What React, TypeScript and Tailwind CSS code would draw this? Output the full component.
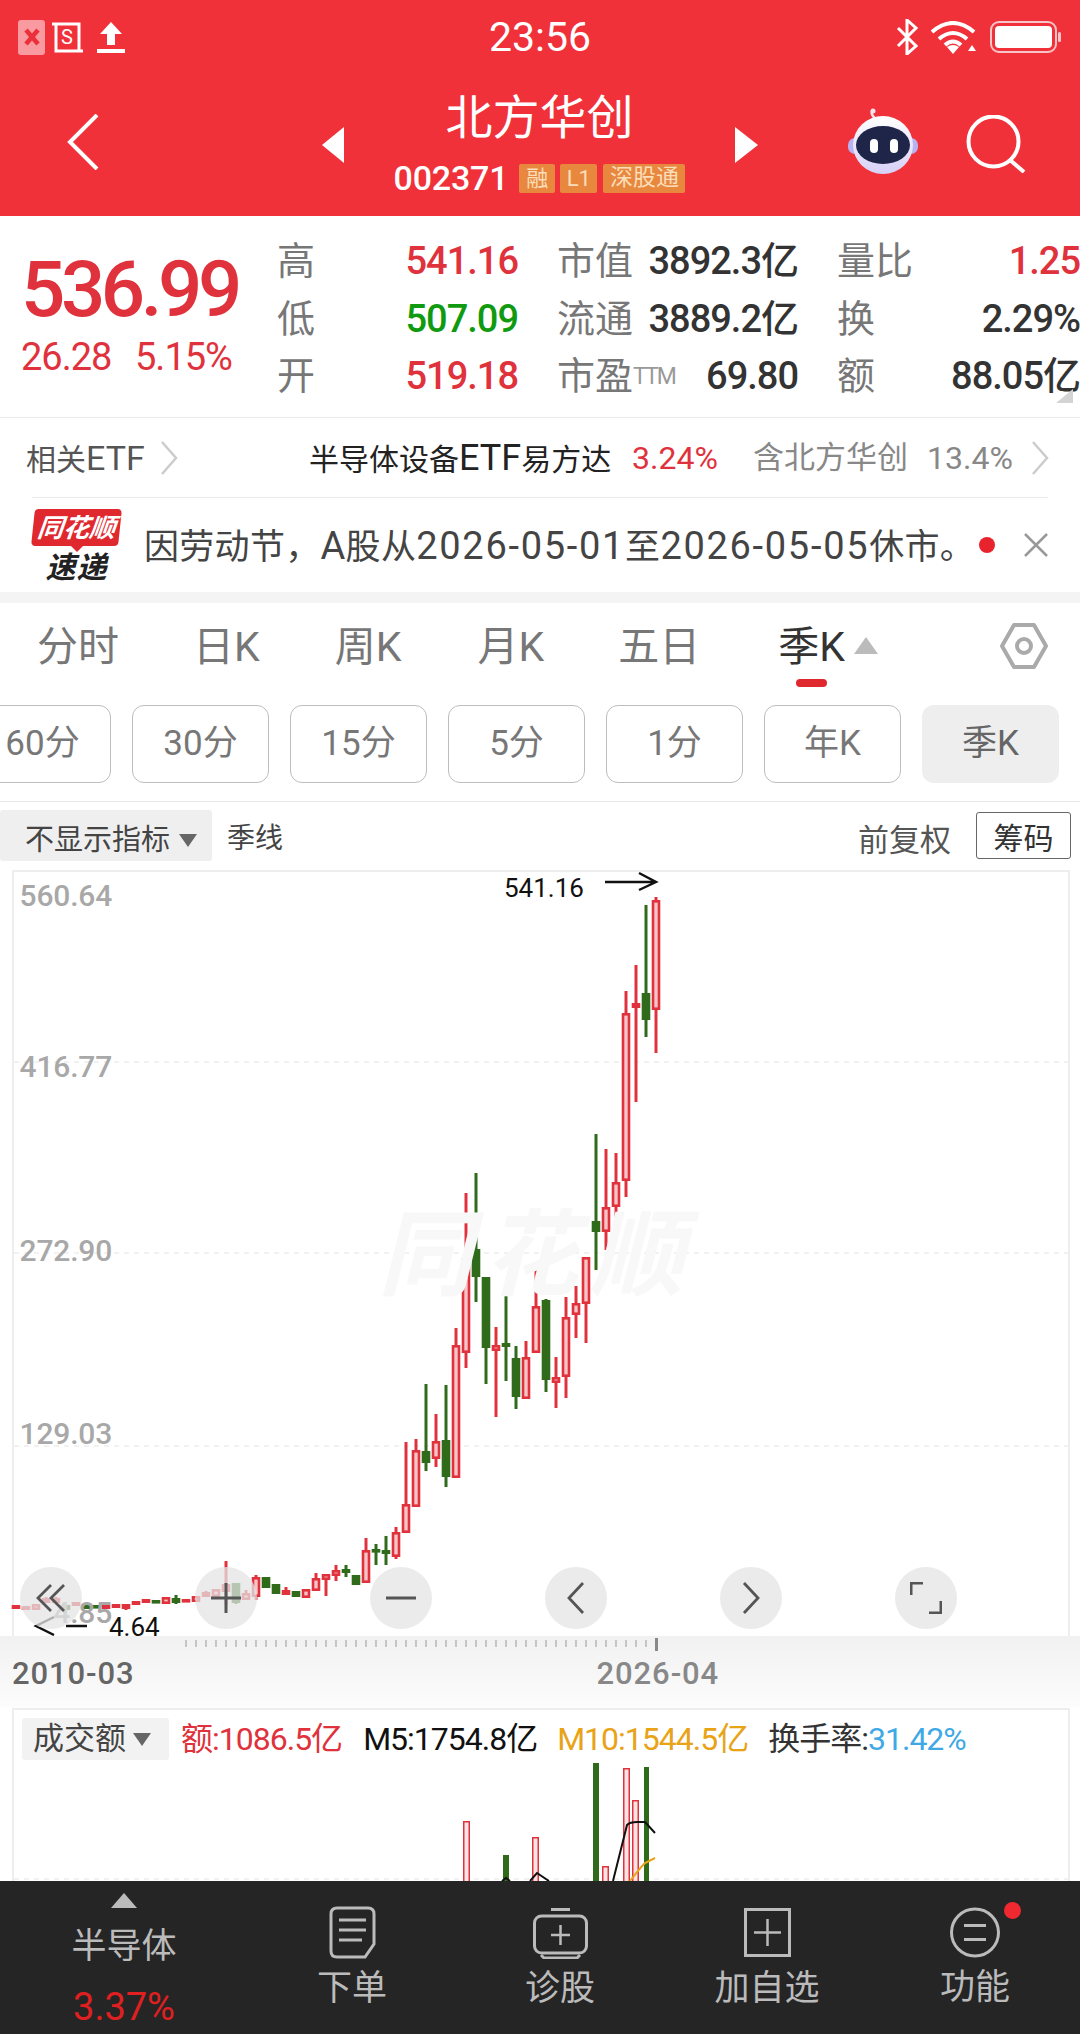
import React from "react";

type Candle = [number, number, number, number, "r" | "g"];

// high, body top, body bottom, low - left to right, 10px apart starting at x=16
const candles: Candle[] = [
  [1605, 1605, 1609, 1609, "r"],
  [1606, 1606, 1610, 1610, "r"],
  [1604, 1604, 1610, 1610, "r"],
  [1597, 1598, 1603, 1603, "r"],
  [1597, 1598, 1603, 1603, "r"],
  [1605, 1605, 1610, 1610, "g"],
  [1602, 1602, 1606, 1606, "r"],
  [1605, 1605, 1609, 1609, "g"],
  [1605, 1605, 1608, 1608, "g"],
  [1605, 1605, 1609, 1609, "r"],
  [1604, 1604, 1608, 1608, "r"],
  [1604, 1604, 1609, 1610, "r"],
  [1601, 1601, 1605, 1605, "r"],
  [1599, 1599, 1603, 1603, "r"],
  [1600, 1600, 1603, 1603, "g"],
  [1597, 1597, 1604, 1604, "r"],
  [1595, 1598, 1603, 1604, "g"],
  [1599, 1599, 1602, 1602, "r"],
  [1596, 1596, 1602, 1602, "r"],
  [1591, 1592, 1597, 1597, "r"],
  [1589, 1589, 1597, 1597, "r"],
  [1561, 1584, 1592, 1605, "r"],
  [1583, 1583, 1603, 1604, "g"],
  [1590, 1593, 1600, 1600, "r"],
  [1575, 1577, 1597, 1600, "r"],
  [1577, 1577, 1588, 1588, "g"],
  [1584, 1584, 1594, 1594, "g"],
  [1587, 1590, 1595, 1595, "r"],
  [1591, 1591, 1597, 1597, "g"],
  [1589, 1589, 1598, 1598, "r"],
  [1573, 1578, 1591, 1591, "r"],
  [1574, 1574, 1580, 1596, "r"],
  [1565, 1570, 1576, 1581, "r"],
  [1565, 1569, 1573, 1577, "g"],
  [1575, 1575, 1585, 1585, "g"],
  [1538, 1550, 1583, 1583, "r"],
  [1544, 1549, 1552, 1565, "g"],
  [1536, 1550, 1554, 1565, "g"],
  [1527, 1532, 1557, 1559, "r"],
  [1442, 1504, 1533, 1533, "r"],
  [1439, 1450, 1507, 1507, "r"],
  [1384, 1451, 1463, 1471, "g"],
  [1414, 1441, 1459, 1467, "r"],
  [1385, 1440, 1477, 1487, "g"],
  [1328, 1345, 1478, 1478, "r"],
  [1193, 1258, 1353, 1368, "r"],
  [1173, 1249, 1277, 1302, "g"],
  [1277, 1277, 1348, 1384, "g"],
  [1327, 1345, 1351, 1417, "r"],
  [1285, 1343, 1347, 1381, "g"],
  [1346, 1358, 1397, 1409, "g"],
  [1341, 1357, 1399, 1399, "r"],
  [1267, 1306, 1353, 1353, "r"],
  [1299, 1300, 1380, 1392, "g"],
  [1357, 1377, 1383, 1408, "r"],
  [1297, 1317, 1377, 1398, "r"],
  [1286, 1303, 1315, 1338, "r"],
  [1257, 1257, 1304, 1343, "r"],
  [1134, 1221, 1232, 1270, "g"],
  [1149, 1207, 1232, 1250, "r"],
  [1153, 1182, 1207, 1222, "r"],
  [991, 1013, 1181, 1197, "r"],
  [965, 1003, 1008, 1102, "r"],
  [905, 993, 1020, 1037, "g"],
  [897, 900, 1010, 1053, "r"],
];

const ticks = Array.from({ length: 47 }, (_, i) => 186 + i * 10);

const periods = ["60分", "30分", "15分", "5分", "1分", "年K"];

const quoteRows = [
  { a: "高", av: "541.16", ac: "text-[#E0323C]", b: "市值", bv: "3892.3亿", c: "量比", cv: "1.25", cc: "text-[#E0323C]" },
  { a: "低", av: "507.09", ac: "text-[#109A10]", b: "流通", bv: "3889.2亿", c: "换", cv: "2.29%", cc: "text-[#333]" },
  { a: "开", av: "519.18", ac: "text-[#E0323C]", b: "市盈", bv: "69.80", c: "额", cv: "88.05亿", cc: "text-[#333]" },
];

function CandleChart() {
  return (
    <svg className="absolute inset-0" width={1080} height={766} viewBox="0 870 1080 766">
      <rect x={13} y={871} width={1056} height={770} fill="none" stroke="#eeeeee" strokeWidth={2} />
      {[1062, 1253, 1446].map((y) => (
        <line key={y} x1={14} x2={1068} y1={y} y2={y} stroke="#e4e4e4" strokeDasharray="5 5" />
      ))}
      {candles.map(([high, top, bottom, low, kind], i) => {
        const x = 16 + i * 10;
        const color = kind === "r" ? "#E0323C" : "#2F6B1A";
        return (
          <g key={i}>
            <line x1={x} x2={x} y1={high} y2={top} stroke={color} strokeWidth={3} />
            <line x1={x} x2={x} y1={bottom} y2={low} stroke={color} strokeWidth={3} />
            <rect
              x={x - 3}
              y={top + 1.3}
              width={6}
              height={Math.max(bottom - top - 2.6, 1)}
              fill={kind === "r" ? "#F7C4C7" : color}
              stroke={color}
              strokeWidth={2.6}
            />
          </g>
        );
      })}
      <path d="M605 882H656M639 873L656 882L639 890" fill="none" stroke="#111" strokeWidth={2.4} />
      <path d="M87 1626H66M54 1617L36 1626L54 1635" fill="none" stroke="#111" strokeWidth={2.4} />
    </svg>
  );
}

function VolumeChart() {
  const bars: [number, number, number, string][] = [
    [463, 7, 1821, "r"],
    [503, 6, 1855, "g"],
    [532, 7, 1837, "r"],
    [593, 6, 1763, "g"],
    [602, 7, 1866, "r"],
    [623, 7, 1768, "r"],
    [632, 7, 1800, "r"],
    [644, 5, 1767, "g"],
  ];
  return (
    <svg className="absolute inset-0" width={1080} height={174} viewBox="0 1707 1080 174">
      <rect x={13} y={1709} width={1056} height={200} fill="none" stroke="#eeeeee" strokeWidth={2} />
      <line x1={14} x2={1068} y1={1879} y2={1879} stroke="#e4e4e4" strokeDasharray="5 5" />
      {bars.map(([x, w, top, kind]) => (
        <rect
          key={x}
          x={x + 0.75}
          y={top + 0.75}
          width={w - 1.5}
          height={1881 - top}
          fill={kind === "r" ? "#FBE3E4" : "#2F6B1A"}
          stroke={kind === "r" ? "#E0323C" : "#2F6B1A"}
          strokeWidth={1.5}
        />
      ))}
      <path d="M502 1881L506 1878L510 1881M530 1881L537 1873L549 1881M613 1881L627 1825Q630 1822 637 1822H645L655 1833" fill="none" stroke="#111" strokeWidth={2} />
      <path d="M630 1881Q640 1868 645 1863L655 1858" fill="none" stroke="#E8A317" strokeWidth={2} />
    </svg>
  );
}

function Robot() {
  return (
    <svg width={72} height={66} viewBox="0 0 72 66">
      <defs>
        <linearGradient id="head" x1="0" y1="0" x2="0" y2="1">
          <stop offset="0" stopColor="#ffffff" />
          <stop offset="1" stopColor="#D6D0F7" />
        </linearGradient>
      </defs>
      <path d="M30 12Q22 6 26 2" fill="none" stroke="#F4E3EA" strokeWidth={2.5} />
      <circle cx={26} cy={3} r={2.5} fill="#F4E3EA" />
      <rect x={1} y={30} width={70} height={16} rx={7} fill="#B9B2F0" />
      <ellipse cx={36} cy={37} rx={30} ry={29} fill="url(#head)" />
      <ellipse cx={36} cy={37} rx={27} ry={19} fill="#1E2549" />
      <rect x={23} y={31} width={8} height={14} rx={4} fill="#ffffff" />
      <rect x={43} y={31} width={8} height={14} rx={4} fill="#ffffff" />
    </svg>
  );
}

function StatusBar() {
  return (
    <div className="h-[74px] grid grid-cols-3 items-center">
      <div className="flex items-center pl-[18px]">
        <div className="w-[27px] h-[35px] rounded-[3px] bg-[#F99AA0] flex items-center justify-center">
          <svg width={16} height={18} viewBox="0 0 16 18">
            <path d="M2 2L14 16M14 2L2 16" stroke="#EC303A" strokeWidth={4.5} />
          </svg>
        </div>
        <svg className="ml-[7px]" width={32} height={33} viewBox="0 0 32 33">
          <path d="M0 3H27V30M4 3V30H31" fill="none" stroke="#fff" strokeWidth={3} />
          <text x={9} y={23} fontSize={20} fill="#fff" fontFamily="Roboto">S</text>
        </svg>
        <svg className="ml-[13px]" width={28} height={32} viewBox="0 0 28 32">
          <path d="M14 1L25 13H18V24H10V13H3Z" fill="#fff" />
          <rect x={0} y={28} width={28} height={4} fill="#fff" />
        </svg>
      </div>
      <div className="text-center text-[41px] text-white leading-none">23:56</div>
      <div className="flex items-center justify-end pr-[19px]">
        <svg width={24} height={36} viewBox="0 0 24 36">
          <path d="M3 9L21 27L12 35V1L21 9L3 27" fill="none" stroke="#fff" strokeWidth={3} />
        </svg>
        <svg className="ml-[11px]" width={47} height={33} viewBox="0 0 47 33">
          <path d="M2 11Q23 -7 44 11M9 18Q23 6 37 18M15 24Q23 17 31 24" fill="none" stroke="#fff" strokeWidth={4} />
          <path d="M17 26L23 33L29 26Q23 22 17 26Z" fill="#fff" />
          <path d="M42 24L46 30H38Z" fill="#fff" />
        </svg>
        <svg className="ml-[13px]" width={71} height={32} viewBox="0 0 71 32">
          <rect x={1} y={1} width={65} height={30} rx={8} fill="none" stroke="#F9C4C7" strokeWidth={2} />
          <rect x={5} y={5} width={57} height={22} rx={4} fill="#fff" />
          <rect x={68} y={11} width={3} height={10} rx={1.5} fill="#F9C4C7" />
        </svg>
      </div>
    </div>
  );
}

function NavBar() {
  return (
    <div className="h-[142px] flex items-start relative">
      <svg className="ml-[67px] mt-[40px]" width={32} height={56} viewBox="0 0 32 56">
        <path d="M30 1L3 28L30 55" fill="none" stroke="#fff" strokeWidth={4} />
      </svg>
      <div className="ml-[223px] mt-[53px] w-0 h-0 border-y-[18px] border-y-transparent border-r-[22px] border-r-white" />
      <div className="w-[391px] flex flex-col items-center">
        <div className="text-[47px] leading-[46px] text-white mt-[21px]">北方华创</div>
        <div className="flex items-center mt-[22px] h-[30px]">
          <span className="text-[34px] font-medium text-white tracking-[-0.2px] mr-[11px]">002371</span>
          <span className="h-[29px] px-[7px] flex items-center rounded-[2px] bg-[#E8883E] text-[#FBDDB9] text-[22px]">融</span>
          <span className="h-[29px] w-[37px] ml-[5px] flex items-center justify-center rounded-[2px] bg-[#E8883E] text-[#FBDDB9] text-[22px]">L1</span>
          <span className="h-[29px] w-[82px] ml-[6px] flex items-center justify-center rounded-[2px] bg-[#E8883E] text-[#FBDDB9] text-[23px]">深股通</span>
        </div>
      </div>
      <div className="mt-[53px] w-0 h-0 border-y-[18px] border-y-transparent border-l-[23px] border-l-white" />
      <div className="ml-[89px] mt-[34px]">
        <Robot />
      </div>
      <svg className="ml-[47px] mt-[41px]" width={60} height={58} viewBox="0 0 60 58">
        <circle cx={27.5} cy={26.5} r={25} fill="none" stroke="#fff" strokeWidth={4} />
        <path d="M44 45L58 57" stroke="#fff" strokeWidth={4} />
      </svg>
    </div>
  );
}

function Quote() {
  return (
    <div className="h-[202px] flex border-b border-[#ececec] relative overflow-hidden">
      <div className="w-[277px] pl-[21px] pt-[34px]">
        <div className="text-[78px] leading-[80px] font-medium text-[#E0323C] tracking-[-4.4px]">536.99</div>
        <div className="flex text-[38px] leading-[40px] text-[#E0323C] tracking-[-1px] mt-[7px]">
          <span className="w-[114px]">26.28</span>
          <span>5.15%</span>
        </div>
      </div>
      <div className="flex flex-col pt-[17px]">
        {quoteRows.map((r) => (
          <div key={r.a} className="h-[57.5px] flex items-center text-[38px] text-[#777]">
            <span className="w-[60px]">{r.a}</span>
            <span className={`w-[181px] text-right text-[38px] font-medium tracking-[-1px] ${r.ac}`}>{r.av}</span>
            <span className="w-[39px]" />
            <span className="w-[76px] whitespace-nowrap">{r.b}</span>
            <span className="w-[165px] flex items-center justify-end text-[38px] font-medium text-[#333] tracking-[-1px] whitespace-nowrap">
              {r.b === "市盈" && <span className="text-[23px] font-normal text-[#999] mr-auto tracking-[-2px]">TTM</span>}
              {r.bv}
            </span>
            <span className="w-[39px]" />
            <span className="w-[100px]">{r.c}</span>
            <span className={`w-[143px] text-right text-[38px] font-medium tracking-[-1px] whitespace-nowrap ${r.cc}`}>{r.cv}</span>
          </div>
        ))}
      </div>
      <div className="absolute left-[1056px] top-[173px] w-0 h-0 border-b-[14px] border-b-[#d4d4d4] border-l-[17px] border-l-transparent" />
    </div>
  );
}

function EtfRow() {
  return (
    <div className="h-[79px] flex items-center text-[30px] leading-none whitespace-nowrap">
      <span className="ml-[26px] w-[121px] text-[#555]">
        相关<span className="text-[34px]">ETF</span>
      </span>
      <svg className="ml-[13px]" width={18} height={34} viewBox="0 0 18 34">
        <path d="M2 1L16 17L2 33" fill="none" stroke="#ccc" strokeWidth={2.5} />
      </svg>
      <span className="ml-[131px] w-[323px] text-[#222]">
        半导体设备<span className="text-[36px]">ETF</span>易方达
      </span>
      <span className="text-[#E0323C] text-[32px] w-[121px]">3.24%</span>
      <span className="text-[#888] text-[31px] w-[174px]">含北方华创</span>
      <span className="text-[#888] text-[32px] w-[104px]">13.4%</span>
      <svg width={18} height={34} viewBox="0 0 18 34">
        <path d="M2 1L16 17L2 33" fill="none" stroke="#ccc" strokeWidth={2.5} />
      </svg>
    </div>
  );
}

function NewsRow() {
  return (
    <div className="mx-[32px] h-[95px] border-t border-[#ececec] relative flex items-center whitespace-nowrap">
      <div className="w-[87px] ml-[1px] mt-[2px] flex flex-col items-center">
        <div className="w-[87px] h-[37px] rounded-[4px] bg-[#E0282F] -skew-x-6 flex items-center justify-center text-[26px] leading-none font-bold italic text-white">
          同花顺
        </div>
        <div className="w-0 h-0 border-x-[6px] border-x-transparent border-t-[6px] border-t-[#E0282F]" />
        <div className="text-[30px] leading-[32px] font-bold italic text-[#222] tracking-[1px]">速递</div>
      </div>
      <span className="ml-[24px] mt-[2px] text-[35px] text-[#444] tracking-[0.3px] w-[835px]">
        因劳动节，<span className="text-[38px]">A</span>股从
        <span className="text-[38px] tracking-[1.7px]">2026-05-01</span>至
        <span className="text-[38px] tracking-[1.7px]">2026-05-05</span>休市。
      </span>
      <div className="w-[16px] h-[16px] rounded-full bg-[#E8232E]" />
      <svg className="ml-[29px]" width={24} height={24} viewBox="0 0 24 24">
        <path d="M1 1L23 23M23 1L1 23" stroke="#999" strokeWidth={2.5} />
      </svg>
    </div>
  );
}

function Tabs() {
  return (
    <div className="h-[102px] flex items-start pt-[16px] text-[41px] leading-[56px] text-[#777] whitespace-nowrap relative">
      <span className="ml-[37px]">分时</span>
      <span className="ml-[74px]">日K</span>
      <span className="ml-[75px]">周K</span>
      <span className="ml-[76px]">月K</span>
      <span className="ml-[74px]">五日</span>
      <div className="ml-[78px] flex flex-col items-center relative">
        <span className="text-[#333]">季K</span>
        <div className="w-[31px] h-[8px] rounded-full bg-[#E0282F] mt-[4px]" />
      </div>
      <div className="ml-[9px] mt-[18px] w-0 h-0 border-x-[12px] border-x-transparent border-b-[17px] border-b-[#bbbbbb]" />
      <svg className="ml-[122px] mt-[4px]" width={48} height={46} viewBox="0 0 48 46">
        <path d="M14 2H34L46 23L34 44H14L2 23Z" fill="none" stroke="#aaa" strokeWidth={4} strokeLinejoin="round" />
        <circle cx={24} cy={23} r={7} fill="none" stroke="#aaa" strokeWidth={4} />
      </svg>
    </div>
  );
}

function Periods() {
  return (
    <div className="flex gap-[21px] -ml-[26px] h-[97px] w-[1106px] border-b border-[#e6e6e6] items-start">
      {periods.map((p) => (
        <div
          key={p}
          className="w-[137px] h-[78px] shrink-0 rounded-[12px] border border-[#bdbdbd] flex items-center justify-center text-[35px] text-[#777]"
        >
          {p}
        </div>
      ))}
      <div className="w-[137px] h-[78px] shrink-0 rounded-[12px] bg-[#eeeeee] flex items-center justify-center text-[35px] text-[#666]">
        季K
      </div>
    </div>
  );
}

function IndicatorRow() {
  return (
    <div className="h-[68px] flex items-start whitespace-nowrap">
      <div className="mt-[8px] w-[212px] h-[51px] bg-[#efefef] rounded-[3px] flex items-center pl-[25px] pt-[10px] text-[29px] text-[#444]">
        不显示指标
        <div className="ml-[9px] w-0 h-0 border-x-[9px] border-x-transparent border-t-[13px] border-t-[#666]" />
      </div>
      <span className="ml-[15px] mt-[17px] text-[28px] leading-[40px] text-[#444]">季线</span>
      <span className="ml-[575px] mt-[17px] text-[31px] leading-[44px] text-[#555]">前复权</span>
      <div className="ml-[25px] mt-[10px] w-[95px] h-[47px] border border-[#666] rounded-[3px] flex items-center justify-center pt-[6px] text-[30px] leading-[36px] text-[#333]">
        筹码
      </div>
    </div>
  );
}

function ChartControls() {
  const icon = "#555555";
  return (
    <div className="absolute left-[20px] top-[697px] flex gap-[113px]">
      <div className="w-[62px] h-[62px] rounded-full bg-[#e4e4e4]/75 flex items-center justify-center">
        <svg width={32} height={32} viewBox="0 0 32 32">
          <path d="M16 3L3 16L16 29M29 3L16 16L29 29" fill="none" stroke={icon} strokeWidth={2.8} />
        </svg>
      </div>
      <div className="w-[62px] h-[62px] rounded-full bg-[#e4e4e4]/75 flex items-center justify-center">
        <svg width={30} height={30} viewBox="0 0 30 30">
          <path d="M0 15H30M15 0V30" stroke={icon} strokeWidth={3} />
        </svg>
      </div>
      <div className="w-[62px] h-[62px] rounded-full bg-[#e4e4e4]/75 flex items-center justify-center">
        <svg width={30} height={4} viewBox="0 0 30 4">
          <path d="M0 2H30" stroke={icon} strokeWidth={3} />
        </svg>
      </div>
      <div className="w-[62px] h-[62px] rounded-full bg-[#e4e4e4]/75 flex items-center justify-center">
        <svg width={18} height={32} viewBox="0 0 18 32">
          <path d="M16 1L2 16L16 31" fill="none" stroke={icon} strokeWidth={2.8} />
        </svg>
      </div>
      <div className="w-[62px] h-[62px] rounded-full bg-[#e4e4e4]/75 flex items-center justify-center">
        <svg width={18} height={32} viewBox="0 0 18 32">
          <path d="M2 1L16 16L2 31" fill="none" stroke={icon} strokeWidth={2.8} />
        </svg>
      </div>
      <div className="w-[62px] h-[62px] rounded-full bg-[#e4e4e4]/75 flex items-center justify-center">
        <svg width={32} height={32} viewBox="0 0 32 32">
          <path d="M1 13V1H13M31 19V31H19" fill="none" stroke={icon} strokeWidth={3} />
        </svg>
      </div>
    </div>
  );
}

function MainChart() {
  const labels = [
    { text: "560.64", top: 6 },
    { text: "416.77", top: 177 },
    { text: "272.90", top: 361 },
    { text: "129.03", top: 544 },
    { text: "4.85", top: 723 },
  ];
  return (
    <div className="h-[766px] relative">
      <CandleChart />
      <div className="absolute left-[378px] top-[338px] text-[94px] leading-[96px] font-bold italic text-[#f8f8f8] tracking-[12px] whitespace-nowrap">同花顺</div>
      {labels.map((l) => (
        <span
          key={l.text}
          className="absolute left-[12px] w-[100px] text-right text-[30px] leading-[40px] font-medium text-[#a8a8a8] tracking-[-0.2px]"
          style={{ top: l.top }}
        >
          {l.text}
        </span>
      ))}
      <span className="absolute left-[504px] top-[2px] text-[26px] leading-[32px] text-[#111]">541.16</span>
      <span className="absolute left-[109px] top-[748px] text-[26px] leading-[18px] text-[#111]">4.64</span>
      <ChartControls />
    </div>
  );
}

function TimeAxis() {
  return (
    <div className="h-[71px] bg-linear-to-b from-[#f1f1f1] to-[#fcfcfc] relative">
      <svg className="absolute inset-0" width={1080} height={20} viewBox="0 1636 1080 20">
        {ticks.map((x) => (
          <line key={x} x1={x} x2={x} y1={1640} y2={1647} stroke="#999" strokeWidth={1} />
        ))}
        <rect x={655} y={1638} width={3} height={13} fill="#888" />
      </svg>
      <div className="flex pt-[20px] text-[31px] leading-[36px] font-medium tracking-[0.9px]">
        <span className="ml-[12px] text-[#666]">2010-03</span>
        <span className="ml-[462px] text-[#888]">2026-04</span>
      </div>
    </div>
  );
}

function VolumePanel() {
  return (
    <div className="h-[174px] relative overflow-hidden">
      <VolumeChart />
      <div className="relative flex items-start pt-[11px] pl-[22px] whitespace-nowrap text-[32px] leading-[42px] tracking-[-1px]">
        <div className="w-[147px] h-[42px] bg-[#f2f2f2] rounded-[3px] flex items-center pl-[11px] text-[31px] tracking-normal text-[#444]">
          成交额
          <div className="ml-[7px] w-0 h-0 border-x-[9px] border-x-transparent border-t-[13px] border-t-[#666]" />
        </div>
        <span className="ml-[12px] text-[#E0323C]">额:1086.5亿</span>
        <span className="ml-[21px] text-[#111]">M5:1754.8亿</span>
        <span className="ml-[20px] text-[#E8A317]">M10:1544.5亿</span>
        <span className="ml-[20px] text-[#333]">
          换手率:<span className="text-[#3FA9E6]">31.42%</span>
        </span>
      </div>
    </div>
  );
}

function BottomBar() {
  const label = "text-[35px] leading-[44px] text-[#bbbbbb] mt-[8px]";
  return (
    <div className="h-[153px] bg-[#252525] grid grid-cols-[248px_208px_208px_206px_210px] whitespace-nowrap">
      <div className="flex flex-col items-center pt-[12px]">
        <div className="w-0 h-0 border-x-[13px] border-x-transparent border-b-[15px] border-b-[#bbbbbb]" />
        <span className="text-[35px] leading-[44px] text-[#bbbbbb] mt-[17px]">半导体</span>
        <span className="text-[38px] leading-[44px] text-[#E02020] mt-[16px]">3.37%</span>
      </div>
      <div className="flex flex-col items-center pt-[25px]">
        <svg width={47} height={53} viewBox="0 0 47 53">
          <path d="M8 2H39Q45 2 45 8V38L36 51H8Q2 51 2 45V8Q2 2 8 2Z" fill="none" stroke="#bbb" strokeWidth={3} />
          <path d="M10 14H37M10 24H37M10 34H33" stroke="#bbb" strokeWidth={3} />
        </svg>
        <span className={label}>下单</span>
      </div>
      <div className="flex flex-col items-center pt-[27px]">
        <svg width={55} height={51} viewBox="0 0 55 51">
          <path d="M18 1.5H37" stroke="#bbb" strokeWidth={3} />
          <rect x={1.5} y={8} width={52} height={37} rx={7} fill="none" stroke="#bbb" strokeWidth={3} />
          <path d="M8 47L11 50H44L47 47" fill="none" stroke="#bbb" strokeWidth={3} />
          <path d="M18 27H37M27.5 17V37" stroke="#bbb" strokeWidth={2.5} />
        </svg>
        <span className={label}>诊股</span>
      </div>
      <div className="flex flex-col items-center pt-[27px]">
        <svg width={47} height={49} viewBox="0 0 47 49">
          <rect x={1.5} y={1.5} width={44} height={46} fill="none" stroke="#bbb" strokeWidth={3} />
          <path d="M10 24.5H37M23.5 11V38" stroke="#bbb" strokeWidth={2.5} />
        </svg>
        <span className="text-[35px] leading-[44px] text-[#bbbbbb] mt-[10px]">加自选</span>
      </div>
      <div className="flex flex-col items-center pt-[26px] relative">
        <svg width={50} height={51} viewBox="0 0 50 51">
          <circle cx={25} cy={25.5} r={23.5} fill="none" stroke="#bbb" strokeWidth={3} />
          <path d="M14 18.5H36M14 32.5H36" stroke="#bbb" strokeWidth={3} />
        </svg>
        <span className={label}>功能</span>
        <div className="absolute left-[134px] top-[21px] w-[17px] h-[17px] rounded-full bg-[#F0282F]" />
      </div>
    </div>
  );
}

export default function App() {
  return (
    <div className="w-[1080px] h-[2034px] overflow-hidden bg-white font-[Roboto,'Noto_Sans_CJK_SC',sans-serif]">
      <div className="h-[216px] bg-[#F1313A]">
        <StatusBar />
        <NavBar />
      </div>
      <Quote />
      <EtfRow />
      <NewsRow />
      <div className="h-[11px] bg-[#f4f4f4]" />
      <Tabs />
      <Periods />
      <IndicatorRow />
      <MainChart />
      <TimeAxis />
      <VolumePanel />
      <BottomBar />
    </div>
  );
}
